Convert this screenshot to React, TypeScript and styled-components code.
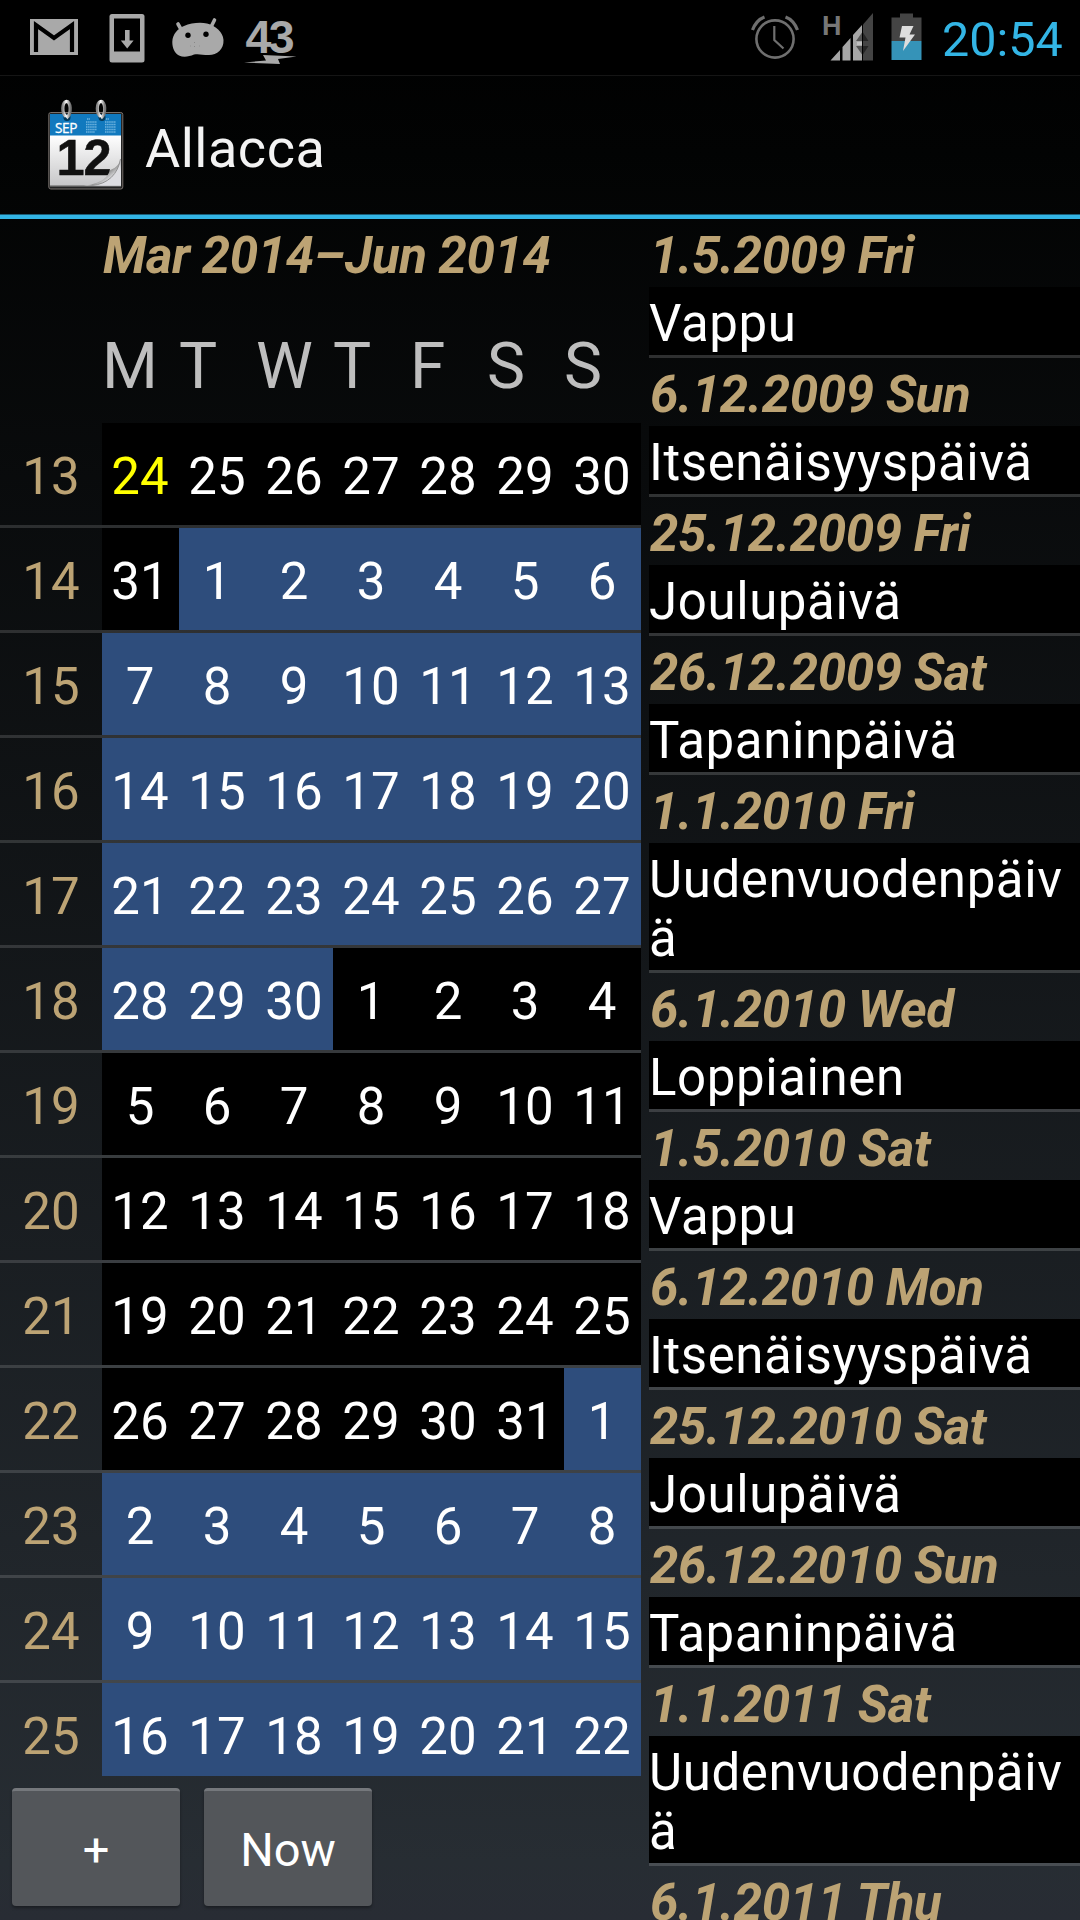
import React from "react";
import styled, { createGlobalStyle } from "styled-components";

const GlobalStyle = createGlobalStyle`
  html, body { margin: 0; padding: 0; background: #000; }
  * { box-sizing: border-box; }
  svg { flex: none; overflow: visible; }
`;

const Screen = styled.div`
  width: 1080px;
  height: 1920px;
  overflow: hidden;
  display: flex;
  flex-direction: column;
  font-family: Roboto, "Noto Sans", sans-serif;
  color: #fff;
  background: linear-gradient(#000 0%, #020303 8%, #272d33 97%, #282c34 100%);
`;

const StatusBar = styled.header`
  flex: none;
  height: 75px;
  background: #000;
  display: flex;
  justify-content: space-between;
`;

const IconGroup = styled.div`
  display: flex;
  align-items: flex-start;
`;

const Clock = styled.div`
  width: 141px;
  padding-left: 3px;
  margin-left: 17px;
  font-size: 48.5px;
  line-height: 80px;
  color: #33b5e5;
  white-space: nowrap;
`;

const ActionBar = styled.div`
  flex: none;
  height: 144px;
  border-top: 1px solid #151515;
  border-bottom: 4px solid #33b5e5;
  box-shadow: inset 0 -1px 0 #1b5f78;
  display: flex;
  align-items: center;
  padding-left: 42px;
`;

const AppTitle = styled.h1`
  margin: 7px 0 0 15px;
  font-size: 54px;
  line-height: 64px;
  font-weight: 400;
  letter-spacing: 0.5px;
  color: #f3f3f3;
`;

const Content = styled.main`
  flex: 1;
  min-height: 0;
  display: grid;
  grid-template-columns: 641px 431px;
  column-gap: 8px;
`;

const CalendarPane = styled.section`
  display: flex;
  flex-direction: column;
  min-height: 0;
`;

const DateHeading = styled.div`
  height: 68px;
  padding-left: 1px;
  font-size: 51px;
  line-height: 73px;
  font-weight: 700;
  font-style: italic;
  letter-spacing: -0.42px;
  color: #bca374;
  white-space: nowrap;
`;

const MonthRange = styled(DateHeading)`
  flex: none;
  padding-left: 103px;
`;

const Weekdays = styled.div`
  flex: none;
  height: 136px;
  padding-left: 102px;
  display: grid;
  grid-template-columns: repeat(7, 77px);
  font-size: 64px;
  line-height: 159px;
  color: #bebebe;
`;

const Weeks = styled.div`
  flex: none;
  height: 1353px;
  overflow: hidden;
`;

const Week = styled.div`
  height: 105px;
  display: grid;
  grid-template-columns: 102px repeat(7, 77px);
  border-bottom: 3px solid rgba(255, 255, 255, 0.14);
  font-size: 51px;
  line-height: 108px;
  text-align: center;
`;

const WeekNumber = styled.div`
  height: 102px;
  color: #bca374;
`;

const Day = styled.div<{ $alt: boolean; $today: boolean }>`
  height: 102px;
  padding-right: 1px;
  background: ${(p) => (p.$alt ? "#2e4d7c" : "#000")};
  color: ${(p) => (p.$today ? "#ff0" : "#fff")};
`;

const Buttons = styled.div`
  display: flex;
  gap: 24px;
  padding: 12px 12px 0;
`;

const Button = styled.button`
  width: 168px;
  height: 118px;
  border: 0;
  border-top: 3px solid #75787c;
  border-radius: 4px;
  padding: 2px 0 0;
  background: #53565a;
  box-shadow: 0 2px 3px rgba(0, 0, 0, 0.35);
  color: #fff;
  font: 400 47px/1 Roboto, "Noto Sans", sans-serif;
`;

const Agenda = styled.section`
  min-height: 0;
  overflow: hidden;
`;

const EventName = styled.div`
  background: #000;
  background-clip: padding-box;
  border-bottom: 3px solid rgba(255, 255, 255, 0.16);
  padding: 7px 0 2px;
  font-size: 51px;
  line-height: 59px;
  letter-spacing: 0.6px;
  word-break: break-all;
`;

const GmailIcon = () => (
  <svg width="48" height="36" style={{ margin: "19px 0 0 30px" }}>
    <rect width="48" height="36" fill="#a9a9a9" />
    <path d="M6 33V6L24 19L42 6V33" fill="none" stroke="#000" strokeWidth="4.2" />
  </svg>
);

const DownloadIcon = () => (
  <svg width="36" height="49" style={{ margin: "14px 0 0 31px" }}>
    <rect x="0.5" width="35" height="48.5" rx="2.5" fill="#a9a9a9" />
    <rect x="5" y="4.5" width="26" height="33" fill="#000" />
    <path d="M16 16h4.6v10.5h4L18.2 34.5L11.8 26.5h4.2z" fill="#a9a9a9" />
  </svg>
);

const AndroidIcon = () => (
  <svg width="52" height="40" style={{ margin: "18px 0 0 27px" }}>
    <path d="M6 6L10 13M42.5 2L39 9" stroke="#a9a9a9" strokeWidth="3.6" strokeLinecap="round" />
    <path
      d="M0.3 24C0.5 16 6 10.5 12 8C19 5 28 4 35 5.5C44 8 51 14 51.5 22C52 31 45 37 37 37C30 37 27 35.5 22 36.5C17 38.5 12 40 7 37.5C2.5 35 0.3 30 0.3 24Z"
      fill="#a9a9a9"
    />
    <circle cx="16" cy="17.3" r="2.7" />
    <circle cx="34" cy="16.3" r="2.7" />
    <path d="M22 24.5h1M22 28.5h1M18 28h.7M27 28h.7" stroke="#888" />
  </svg>
);

const CounterIcon = () => (
  <svg width="54" height="50" style={{ margin: "16px 0 0 21px" }}>
    <text x="0.5" y="37" fontFamily="Liberation Sans, sans-serif" fontWeight="700" fontSize="46.5" textLength="49" fill="#a9a9a9">
      43
    </text>
    <path d="M18 39L51.5 40.5L33 43L35 48L-1 46.5L21 44.5Z" fill="#a9a9a9" />
  </svg>
);

const AlarmIcon = () => (
  <svg width="48" height="46" style={{ margin: "15px 0 0 0" }} fill="none" stroke="#6f6f6f" strokeWidth="2.6">
    <circle cx="24" cy="24" r="18.6" />
    <path d="M23.3 11V25L32.5 33.5" strokeWidth="2.2" />
    <path d="M1.5 15C4 8.5 8 4 13.5 2M46.5 15C44 8.5 40 4 34.5 2" strokeWidth="3.2" />
  </svg>
);

const SignalIcon = () => (
  <svg width="51" height="48" style={{ margin: "13px 0 0 24px" }}>
    <text x="-1" y="21.5" fontFamily="Liberation Sans, sans-serif" fontWeight="700" fontSize="28" textLength="19.5" lengthAdjust="spacingAndGlyphs" fill="#777">
      H
    </text>
    <path d="M50 0V47.5H40V11.5Z" fill="#444" />
    <path d="M7.5 47.5L17 37V47.5ZM19.5 47.5V34L27.5 25V47.5ZM30 47.5V22L39 12V47.5Z" fill="#a6a6a6" />
    <path d="M33 28L39 19.5V28ZM33 33L39 41.5V33Z" fill="#555" />
    <path d="M40 19.5L45.5 28H40ZM40 33H45.5L40 41.5Z" fill="#252525" />
    <path d="M34 29h5v3h-5z" fill="#c0c0c0" />
  </svg>
);

const BatteryIcon = () => (
  <svg width="31" height="48" style={{ margin: "13px 0 0 17px" }}>
    <path d="M0.5 4.5H9V0.5H22V4.5H30.5V28H0.5Z" fill="#444" />
    <rect x="0.5" y="28" width="30" height="19" fill="#3593b8" />
    <path d="M11 13H22.5L18.5 21.5H24L12 38L14.5 24.5H8.5Z" fill="#ddd" />
  </svg>
);

const CalendarIcon = () => (
  <svg width="88" height="96" viewBox="0 0 88 96">
    <defs>
      <linearGradient id="paper" x1="0" y1="0" x2="0" y2="1">
        <stop offset="0" stopColor="#fff" />
        <stop offset="1" stopColor="#c6c6c8" />
      </linearGradient>
      <linearGradient id="curl" x1="0" y1="0" x2="1" y2="1">
        <stop offset="0.2" stopColor="#b5b5b5" />
        <stop offset="0.48" stopColor="#fff" />
        <stop offset="0.6" stopColor="#999" />
        <stop offset="0.75" stopColor="#e6e6e8" />
      </linearGradient>
      <linearGradient id="metal">
        <stop offset="0" stopColor="#888" />
        <stop offset="0.45" stopColor="#fff" />
        <stop offset="1" stopColor="#777" />
      </linearGradient>
    </defs>
    <rect x="6.8" y="14.5" width="74" height="76.5" rx="2" fill="#242424" stroke="#77706c" strokeWidth="1" />
    <rect x="8" y="37" width="71" height="51" fill="url(#paper)" />
    <rect x="8" y="16" width="71" height="21.5" fill="#1179be" />
    <path d="M8 87.7h71" stroke="#909090" strokeWidth="1.4" />
    <text x="13" y="34.7" fontFamily="Open Sans, sans-serif" fontSize="13.6" textLength="22.5" fill="#fff" stroke="#fff" strokeWidth="0.3">
      SEP
    </text>
    <g stroke="#70b4df" strokeWidth="1.5" strokeDasharray="1.5 .6">
      <path d="M44 24h11M44 26.5h11M44 29h11M44 31.5h11M44 34h9M63 24h11M63 26.5h11M63 29h11M63 31.5h11M63 34h11M45 21h3M64 21h3" />
    </g>
    <text x="14.5" y="77.3" fontFamily="Liberation Sans, sans-serif" fontWeight="700" fontSize="50.5" textLength="55" fill="#111" stroke="#111" strokeWidth="0.5">
      12
    </text>
    <path d="M79 59V87.5H42C60 85.5 66 79 68 72C75 70 78 65 79 59Z" fill="url(#curl)" />
    <path d="M78.5 61C76 76 66 86 50 87.5H79Z" fill="#dedee2" />
    <path d="M78.5 61C76 76 66 86 50 87.5" fill="none" stroke="#929292" />
    <circle cx="25" cy="19.5" r="3.5" fill="#063958" />
    <circle cx="60" cy="19.5" r="3.5" fill="#063958" />
    <g fill="none" stroke="url(#metal)" strokeWidth="3.2">
      <path d="M24 18.5C19.5 15 20 5 24 3.5C29 2.5 30 16 24.5 20" />
      <path d="M58.5 18.5C54 15 54.5 5 58.5 3.5C63.5 2.5 64.5 16 59 20" />
    </g>
  </svg>
);

const WEEKDAYS = ["M", "T", "W", "T", "F", "S", "S"];
const MONTH_LENGTHS = [31, 30, 31, 30];
const FIRST_WEEK = 13;
const WEEK_COUNT = 13;

interface DayInfo {
  day: number;
  alt: boolean;
  today: boolean;
}

// Starts on Monday 24 March 2014; every other month is tinted.
function buildWeeks(): DayInfo[][] {
  const weeks: DayInfo[][] = [];
  let day = 24;
  let month = 0;
  for (let w = 0; w < WEEK_COUNT; w++) {
    const week: DayInfo[] = [];
    for (let d = 0; d < 7; d++) {
      week.push({ day, alt: month % 2 === 1, today: w === 0 && d === 0 });
      day += 1;
      if (day > MONTH_LENGTHS[month]) {
        day = 1;
        month += 1;
      }
    }
    weeks.push(week);
  }
  return weeks;
}

const EVENTS: [string, string][] = [
  ["1.5.2009 Fri", "Vappu"],
  ["6.12.2009 Sun", "Itsenäisyyspäivä"],
  ["25.12.2009 Fri", "Joulupäivä"],
  ["26.12.2009 Sat", "Tapaninpäivä"],
  ["1.1.2010 Fri", "Uudenvuodenpäivä"],
  ["6.1.2010 Wed", "Loppiainen"],
  ["1.5.2010 Sat", "Vappu"],
  ["6.12.2010 Mon", "Itsenäisyyspäivä"],
  ["25.12.2010 Sat", "Joulupäivä"],
  ["26.12.2010 Sun", "Tapaninpäivä"],
  ["1.1.2011 Sat", "Uudenvuodenpäivä"],
  ["6.1.2011 Thu", ""],
];

export default function App() {
  return (
    <>
      <GlobalStyle />
      <Screen>
        <StatusBar>
          <IconGroup>
            <GmailIcon />
            <DownloadIcon />
            <AndroidIcon />
            <CounterIcon />
          </IconGroup>
          <IconGroup>
            <AlarmIcon />
            <SignalIcon />
            <BatteryIcon />
            <Clock>20:54</Clock>
          </IconGroup>
        </StatusBar>
        <ActionBar>
          <CalendarIcon />
          <AppTitle>Allacca</AppTitle>
        </ActionBar>
        <Content>
          <CalendarPane>
            <MonthRange>Mar 2014–Jun 2014</MonthRange>
            <Weekdays>
              {WEEKDAYS.map((name, i) => (
                <span key={i}>{name}</span>
              ))}
            </Weekdays>
            <Weeks>
              {buildWeeks().map((week, w) => (
                <Week key={w}>
                  <WeekNumber>{FIRST_WEEK + w}</WeekNumber>
                  {week.map((d, i) => (
                    <Day key={i} $alt={d.alt} $today={d.today}>
                      {d.day}
                    </Day>
                  ))}
                </Week>
              ))}
            </Weeks>
            <Buttons>
              <Button>+</Button>
              <Button>Now</Button>
            </Buttons>
          </CalendarPane>
          <Agenda>
            {EVENTS.map(([date, name]) => (
              <React.Fragment key={date}>
                <DateHeading>{date}</DateHeading>
                {name && <EventName>{name}</EventName>}
              </React.Fragment>
            ))}
          </Agenda>
        </Content>
      </Screen>
    </>
  );
}
